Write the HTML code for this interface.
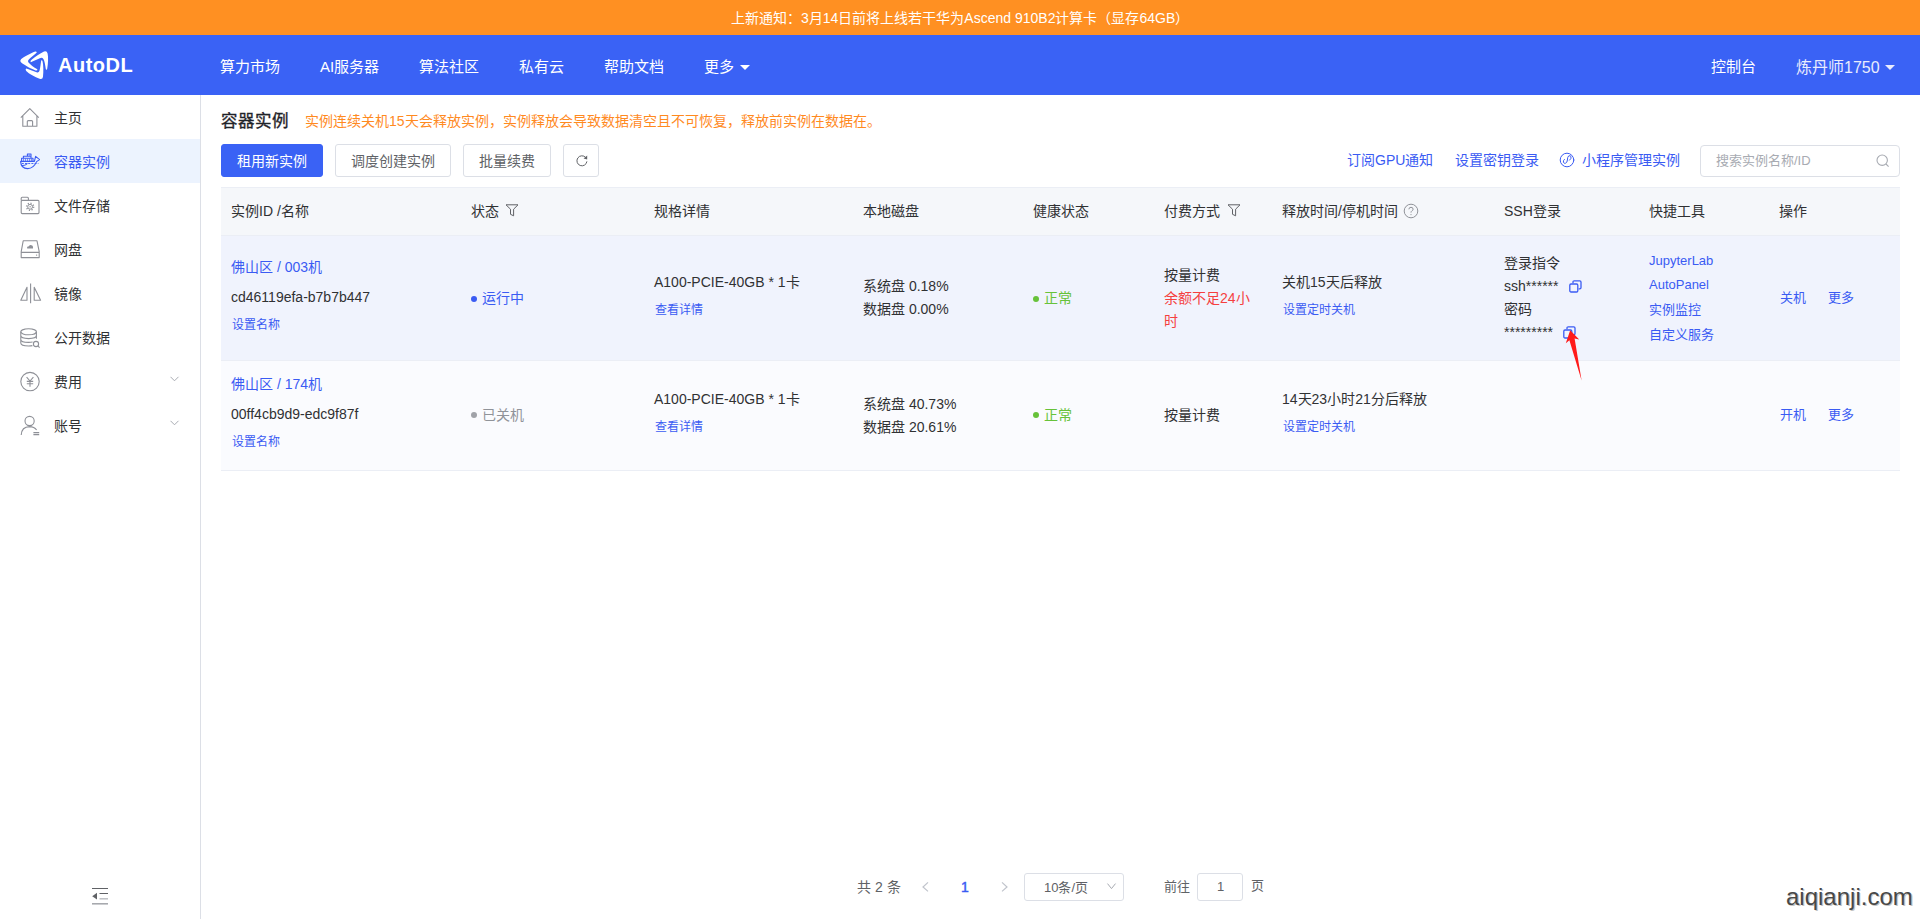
<!DOCTYPE html>
<html lang="zh-CN">
<head>
<meta charset="utf-8">
<title>容器实例 - AutoDL</title>
<style>
*{box-sizing:border-box;margin:0;padding:0}
html,body{width:1920px;height:919px;overflow:hidden;background:#fff}
body{position:relative;font-family:"Liberation Sans",sans-serif;font-size:14px;color:#303133}
.a{position:absolute;white-space:nowrap}
.notice{position:absolute;left:0;top:0;width:1920px;height:35px;background:#FF9022;color:#fff;font-size:14px;line-height:35px;padding-top:1px;padding-left:731px;white-space:nowrap}
.header{position:absolute;left:0;top:35px;width:1920px;height:60px;background:#3A62F5;color:#fff}
.nav{font-size:15px;line-height:20px;color:#fff}
.caret{position:absolute;width:0;height:0;border-left:5px solid transparent;border-right:5px solid transparent;border-top:5px solid #fff}
.sidebar{position:absolute;left:0;top:95px;width:201px;height:824px;border-right:1px solid #DCDFE6;background:#fff}
.mi{position:absolute;left:0;width:200px;height:44px}
.mi .t{position:absolute;left:54px;top:13px;font-size:14px;line-height:20px;color:#303133}
.mi.act{background:#ECF3FE}
.mi.act .t{color:#3A5BF3}
.mi svg{position:absolute;left:20px;top:12px}
.link{color:#3A5BF3}
.btn{position:absolute;top:144px;height:33px;border:1px solid #DCDFE6;border-radius:3px;background:#fff;font-size:14px;line-height:32px;text-align:center;color:#606266}
.btn.pri{background:#3A62F5;border-color:#3A62F5;color:#fff}
.table{position:absolute;left:221px;top:187px;width:1679px;height:284px}
.th{position:absolute;left:0;top:0;width:1679px;height:49px;background:#F5F7FA;border-top:1px solid #EBEEF5;border-bottom:1px solid #EBEEF5}
.r1{position:absolute;left:0;top:49px;width:1679px;height:125px;background:#F0F3FD;border-bottom:1px solid #EBEEF5}
.r2{position:absolute;left:0;top:174px;width:1679px;height:110px;background:#FAFBFE;border-bottom:1px solid #EBEEF5}
.t14{position:absolute;white-space:nowrap;font-size:14px;line-height:20px;color:#303133}
.t13{position:absolute;white-space:nowrap;font-size:13px;line-height:20px;color:#303133}
.t12{position:absolute;white-space:nowrap;font-size:12px;line-height:20px;color:#303133}
.lk{color:#3A5BF3}
.dot{position:absolute;width:6px;height:6px;border-radius:50%}
</style>
</head>
<body>
<div class="notice">上新通知：3月14日前将上线若干华为Ascend 910B2计算卡（显存64GB）</div>
<div class="header">
  <svg class="a" style="left:18px;top:13px" width="34" height="34" viewBox="0 0 34 34">
    <path fill="#fff" d="M18.8,4.6 Q18.6,3.2 16.5,3.8 C12,5.5 5,9.5 3,11.3 Q1.4,13 3.2,14.6 C7,17.5 14,21.5 17.6,22.4 Q19.8,22.8 19.3,21.3 C16,19.5 12,16.5 10.5,14.6 Q9.2,12.8 10.8,11.4 C13,9.5 16.5,7 18.8,4.6 Z"/>
    <path fill="#fff" d="M12.8,14.2 Q11.8,13.2 13.6,11.8 C17,9 22,5.5 26,3.6 Q28.8,2.4 29.6,5.4 C30.4,9 30.2,15 29.2,20.8 Q28.6,22.8 27.8,21 C27.2,17 26.6,13 25.4,11 Q24.2,9.2 21.8,10.2 C19,11.4 15.5,13 12.8,14.2 Z"/>
    <path fill="#fff" d="M8.2,20.6 Q7,21.4 8.2,23 C11,25.8 17,29 21.6,30.8 Q24.6,31.8 25,28.8 C25.6,23 25.4,17 24.6,13.4 Q24,11.4 23.2,12.6 C22.6,16 22.4,20 21.4,23 Q20.6,25 18.6,24.2 C15,23 11,21.6 8.2,20.6 Z"/>
  </svg>
  <div class="a" style="left:58px;top:18px;font-size:20px;line-height:24px;font-weight:bold;color:#fff;letter-spacing:0.5px">AutoDL</div>
  <div class="a nav" style="left:220px;top:22px">算力市场</div>
  <div class="a nav" style="left:320px;top:22px">AI服务器</div>
  <div class="a nav" style="left:419px;top:22px">算法社区</div>
  <div class="a nav" style="left:519px;top:22px">私有云</div>
  <div class="a nav" style="left:604px;top:22px">帮助文档</div>
  <div class="a nav" style="left:704px;top:22px">更多</div>
  <div class="caret" style="left:740px;top:30px"></div>
  <div class="a nav" style="left:1711px;top:22px">控制台</div>
  <div class="a nav" style="left:1796px;top:23px;font-size:16px;color:#E9ECFD">炼丹师1750</div>
  <div class="caret" style="left:1885px;top:30px;border-top-color:#E9ECFD"></div>
</div>
<div class="sidebar">
  <div class="mi" style="top:0">
    <svg width="20" height="20" viewBox="0 0 20 20" fill="none" stroke="#8E9097" stroke-width="1.1" stroke-linejoin="round"><path d="M0.8,10.6 L9.8,1.6 L18.8,10.6 M2.8,8.8 V19.3 H16.9 V8.8 M7.3,19.3 V14.6 Q7.3,13.6 8.3,13.6 H11.6 Q12.6,13.6 12.6,14.6 V19.3"/></svg>
    <div class="t">主页</div>
  </div>
  <div class="mi act" style="top:44px">
    <svg width="20" height="20" viewBox="0 0 20 20" fill="none" stroke="#3A5BF3" stroke-width="1.1" stroke-linejoin="round"><path d="M0.6,10.4 H14.4 L15.6,5.4 L19.6,8.6 L16.6,10.6 Q13.6,17.6 7.6,17.6 Q1,17.6 0.6,10.4 Z"/><path d="M1.6,10.4 V7.2 H13 V10.4 M3.4,7.2 V5.2 H11 V7.2 M7.4,5.2 V3 H11 V5.2"/><path d="M3.6,7.4 V10.2 M5.6,7.4 V10.2 M7.6,7.4 V10.2 M9.6,7.4 V10.2 M11.4,7.4 V10.2 M9.2,3.4 V5" stroke-width="0.9" stroke-opacity="0.8"/><path d="M1.8,12.5 H18.4" stroke-width="0.9" stroke-dasharray="2 1.2"/><path d="M1.8,14.6 Q5.2,14.8 7.6,12.6" stroke-width="1"/></svg>
    <div class="t">容器实例</div>
  </div>
  <div class="mi" style="top:88px">
    <svg width="20" height="20" viewBox="0 0 20 20" fill="none" stroke="#8E9097" stroke-width="1.1" stroke-linejoin="round"><path d="M1.2,5.4 V3.2 Q1.2,2.2 2.2,2.2 H7.4 Q8.4,2.2 8.4,3.2 V5.4"/><rect x="1.2" y="5.4" width="17.8" height="13.2" rx="1"/><circle cx="10.1" cy="11.8" r="3.5" stroke-width="1.5" stroke-dasharray="1.1 1.65"/><circle cx="10.1" cy="11.8" r="2.4" stroke-width="1"/><circle cx="10.1" cy="11.8" r="0.7" fill="#8E9097" stroke="none"/></svg>
    <div class="t">文件存储</div>
  </div>
  <div class="mi" style="top:132px">
    <svg width="20" height="20" viewBox="0 0 20 20" fill="none" stroke="#8E9097" stroke-width="1.1" stroke-linejoin="round"><path d="M3.2,1.8 H17 L19.2,12.6 V18.6 H1.2 V12.6 Z M1.2,13.4 H19.2"/><circle cx="16.6" cy="16.1" r="0.7" fill="#8E9097" stroke="none"/><path d="M7.2,9.6 Q6.6,7.2 9,7.2 Q9.6,5.4 11.4,6.2 Q13.4,6.6 13,9.6 Z" fill="#8E9097" stroke="none"/></svg>
    <div class="t">网盘</div>
  </div>
  <div class="mi" style="top:176px">
    <svg width="22" height="22" viewBox="0 0 22 22" fill="none" stroke="#8E9097" stroke-width="1.1" stroke-linejoin="round"><path d="M0.8,17.2 L7,4.2 V17.2 Z M14.2,4.2 L20.6,17.2 H14.2 Z M10.6,0.5 V20.2"/></svg>
    <div class="t">镜像</div>
  </div>
  <div class="mi" style="top:220px">
    <svg width="20" height="22" viewBox="0 0 20 22" fill="none" stroke="#8E9097" stroke-width="1.1" stroke-linejoin="round"><ellipse cx="8.6" cy="4.8" rx="7.8" ry="3"/><path d="M0.8,4.8 V16 Q0.8,19 8.6,19 Q11,19 12.4,18.6 M16.4,4.8 V11.8 M0.8,8.6 Q0.8,11.6 8.6,11.6 Q16.4,11.6 16.4,8.6 M0.8,12.4 Q0.8,15.4 8.6,15.4 Q10.8,15.4 12.6,15"/><circle cx="16" cy="17" r="2.6"/><path d="M17.8,18.8 L19.6,20.6"/></svg>
    <div class="t">公开数据</div>
  </div>
  <div class="mi" style="top:264px">
    <svg width="20" height="21" viewBox="0 0 20 21" fill="none" stroke="#8E9097" stroke-width="1.1" stroke-linejoin="round"><circle cx="10" cy="10.6" r="9.2"/><path d="M6.6,6.2 L10,10 L13.4,6.2 M6.8,10.4 H13.2 M6.8,12.8 H13.2 M10,10 V15.8"/></svg>
    <div class="t">费用</div>
    <svg style="left:170px;top:17px" width="10" height="7" viewBox="0 0 10 7" fill="none" stroke="#A8ABB2" stroke-width="1"><path d="M0.5,0.8 L4.5,4.8 L8.5,0.8"/></svg>
  </div>
  <div class="mi" style="top:308px">
    <svg width="20" height="21" viewBox="0 0 20 21" fill="none" stroke="#8E9097" stroke-width="1.1" stroke-linejoin="round"><circle cx="9.6" cy="6" r="4.6"/><path d="M1.2,20 Q1.6,11.8 9.6,11.6 Q14.2,11.6 16.6,15"/><path d="M13.4,17.6 H19.2 M13.4,19.6 H19.2"/></svg>
    <div class="t">账号</div>
    <svg style="left:170px;top:17px" width="10" height="7" viewBox="0 0 10 7" fill="none" stroke="#A8ABB2" stroke-width="1"><path d="M0.5,0.8 L4.5,4.8 L8.5,0.8"/></svg>
  </div>
  <svg style="position:absolute;left:92px;top:793px" width="17" height="18" viewBox="0 0 17 18" fill="none" stroke-width="1"><path d="M0,0.5 H16" stroke="#606266"/><path d="M7.5,5.5 H16" stroke="#606266"/><path d="M7.5,10.8 H16" stroke="#BDBFC4" stroke-width="1.5"/><path d="M0,15.8 H16" stroke="#A3A5AA" stroke-width="1.5"/><path d="M0.2,8.2 L5,4.8 V11.6 Z" fill="#606266" stroke="none"/></svg>
</div>
<div class="a" style="left:221px;top:109px;font-size:16.5px;line-height:24px;-webkit-text-stroke:0.35px #1F2329;color:#1F2329">容器实例</div>
<div class="a" style="left:305px;top:111px;font-size:14px;line-height:20px;color:#FF8A1F">实例连续关机15天会释放实例，实例释放会导致数据清空且不可恢复，释放前实例在数据在。</div>
<div class="btn pri" style="left:221px;width:102px">租用新实例</div>
<div class="btn" style="left:335px;width:116px">调度创建实例</div>
<div class="btn" style="left:463px;width:88px">批量续费</div>
<div class="btn" style="left:563px;width:36px">
  <svg style="position:absolute;left:11px;top:8px" width="14" height="14" viewBox="0 0 14 14" fill="none" stroke="#606266" stroke-width="1"><path d="M10.6,4.4 A5,5 0 1 0 11.9,8.4"/><path d="M12.2,2.6 L12.2,6.4 L8.6,5.6 Z" fill="#606266" stroke="none"/></svg>
</div>
<div class="a link" style="left:1347px;top:150px;font-size:14px;line-height:20px">订阅GPU通知</div>
<div class="a link" style="left:1455px;top:150px;font-size:14px;line-height:20px">设置密钥登录</div>
<svg class="a" style="left:1559px;top:152px" width="16" height="16" viewBox="0 0 16 16" fill="none" stroke="#3A5BF3" stroke-width="1" stroke-linecap="round"><circle cx="8" cy="8" r="6.8"/><path d="M5.4,7.4 Q4,8.6 4.4,10.2 Q5,11.8 6.6,11.2 Q8.2,10.6 8.4,8 Q8.4,5.2 9.6,4 Q11.2,3 12,4.6 Q12.6,6.6 10.6,8.2"/></svg>
<div class="a link" style="left:1582px;top:150px;font-size:14px;line-height:20px">小程序管理实例</div>
<div class="a" style="left:1700px;top:145px;width:200px;height:32px;border:1px solid #DCDFE6;border-radius:4px;background:#fff">
  <div class="a" style="left:15px;top:5px;font-size:13px;line-height:20px;color:#A8ABB2">搜索实例名称/ID</div>
  <svg class="a" style="left:175px;top:8px" width="14" height="14" viewBox="0 0 14 14" fill="none" stroke="#A8ABB2" stroke-width="1.1"><circle cx="6.2" cy="6.2" r="5.2"/><path d="M10,10 L12.6,12.6"/></svg>
</div>
<div class="table">
  <div class="th"></div>
  <div class="r1"></div>
  <div class="r2"></div>
</div>
<div class="t14" style="left:231px;top:201px">实例ID /名称</div>
<div class="t14" style="left:471px;top:201px">状态</div><svg class="a" style="left:505px;top:203px" width="14" height="15" viewBox="0 0 14 15" fill="none" stroke="#606266" stroke-width="1" stroke-linejoin="round"><path d="M1,1.8 H13 L8.6,6.2 V12.8 L5.5,11.3 V6.2 Z"/></svg>
<div class="t14" style="left:654px;top:201px">规格详情</div>
<div class="t14" style="left:863px;top:201px">本地磁盘</div>
<div class="t14" style="left:1033px;top:201px">健康状态</div>
<div class="t14" style="left:1164px;top:201px">付费方式</div><svg class="a" style="left:1227px;top:203px" width="14" height="15" viewBox="0 0 14 15" fill="none" stroke="#606266" stroke-width="1" stroke-linejoin="round"><path d="M1,1.8 H13 L8.6,6.2 V12.8 L5.5,11.3 V6.2 Z"/></svg>
<div class="t14" style="left:1282px;top:201px">释放时间/停机时间</div>
<svg class="a" style="left:1403px;top:203px" width="16" height="16" viewBox="0 0 16 16" fill="none" stroke="#909399" stroke-width="1"><circle cx="8" cy="8" r="6.8"/><path d="M5.9,6.3 Q5.9,4.3 8,4.3 Q10.1,4.3 10.1,6.2 Q10.1,7.3 8.9,7.9 Q8,8.4 8,9.6"/><circle cx="8" cy="11.6" r="0.6" fill="#909399" stroke="none"/></svg>
<div class="t14" style="left:1504px;top:201px">SSH登录</div>
<div class="t14" style="left:1649px;top:201px">快捷工具</div>
<div class="t14" style="left:1779px;top:201px">操作</div>

<div class="t14 lk" style="left:231px;top:257px">佛山区 / 003机</div>
<div class="t14" style="left:231px;top:287px">cd46119efa-b7b7b447</div>
<div class="t12 lk" style="left:232px;top:315px">设置名称</div>
<div class="dot" style="left:471px;top:296px;background:#3A5BF3"></div>
<div class="t14 lk" style="left:482px;top:288px">运行中</div>
<div class="t14" style="left:654px;top:272px">A100-PCIE-40GB * 1卡</div>
<div class="t12 lk" style="left:655px;top:300px">查看详情</div>
<div class="t14" style="left:863px;top:276px">系统盘 0.18%</div>
<div class="t14" style="left:863px;top:299px">数据盘 0.00%</div>
<div class="dot" style="left:1033px;top:296px;background:#67C23A"></div>
<div class="t14" style="left:1044px;top:288px;color:#67C23A">正常</div>
<div class="t14" style="left:1164px;top:265px">按量计费</div>
<div class="t14" style="left:1164px;top:288px;color:#F53F3F">余额不足24小</div>
<div class="t14" style="left:1164px;top:311px;color:#F53F3F">时</div>
<div class="t14" style="left:1282px;top:272px">关机15天后释放</div>
<div class="t12 lk" style="left:1283px;top:300px">设置定时关机</div>
<div class="t14" style="left:1504px;top:253px">登录指令</div>
<div class="t14" style="left:1504px;top:276px">ssh******</div><svg class="a" style="left:1569px;top:280px" width="13" height="13" viewBox="0 0 13 13" fill="none" stroke="#3A5BF3" stroke-width="1.3"><path d="M4,3.2 V2 Q4,0.8 5.2,0.8 H10.8 Q12,0.8 12,2 V7.6 Q12,8.8 10.8,8.8 H9.6"/><rect x="0.8" y="4" width="8" height="8" rx="1.2"/></svg>
<div class="t14" style="left:1504px;top:299px">密码</div>
<div class="t14" style="left:1504px;top:322px">*********</div><svg class="a" style="left:1563px;top:326px" width="13" height="13" viewBox="0 0 13 13" fill="none" stroke="#3A5BF3" stroke-width="1.3"><path d="M4,3.2 V2 Q4,0.8 5.2,0.8 H10.8 Q12,0.8 12,2 V7.6 Q12,8.8 10.8,8.8 H9.6"/><rect x="0.8" y="4" width="8" height="8" rx="1.2"/></svg>
<div class="t13 lk" style="left:1649px;top:251px">JupyterLab</div>
<div class="t13 lk" style="left:1649px;top:275px">AutoPanel</div>
<div class="t13 lk" style="left:1649px;top:300px">实例监控</div>
<div class="t13 lk" style="left:1649px;top:325px">自定义服务</div>
<div class="t13 lk" style="left:1780px;top:288px">关机</div>
<div class="t13 lk" style="left:1828px;top:288px">更多</div>

<div class="t14 lk" style="left:231px;top:374px">佛山区 / 174机</div>
<div class="t14" style="left:231px;top:404px">00ff4cb9d9-edc9f87f</div>
<div class="t12 lk" style="left:232px;top:432px">设置名称</div>
<div class="dot" style="left:471px;top:412px;background:#A0A2A8"></div>
<div class="t14" style="left:482px;top:405px;color:#909399">已关机</div>
<div class="t14" style="left:654px;top:389px">A100-PCIE-40GB * 1卡</div>
<div class="t12 lk" style="left:655px;top:417px">查看详情</div>
<div class="t14" style="left:863px;top:394px">系统盘 40.73%</div>
<div class="t14" style="left:863px;top:417px">数据盘 20.61%</div>
<div class="dot" style="left:1033px;top:412px;background:#67C23A"></div>
<div class="t14" style="left:1044px;top:405px;color:#67C23A">正常</div>
<div class="t14" style="left:1164px;top:405px">按量计费</div>
<div class="t14" style="left:1282px;top:389px">14天23小时21分后释放</div>
<div class="t12 lk" style="left:1283px;top:417px">设置定时关机</div>
<div class="t13 lk" style="left:1780px;top:405px">开机</div>
<div class="t13 lk" style="left:1828px;top:405px">更多</div>


<svg class="a" style="left:0;top:0;pointer-events:none" width="1920" height="919" viewBox="0 0 1920 919"><path fill="#FF1A1A" d="M1570.2,330.2 L1579.2,339.4 L1574.6,338.6 L1581.6,380.5 L1569.4,340.2 L1565.8,343.2 Z"/></svg>
<div class="t14" style="left:857px;top:877px;color:#606266">共 2 条</div>
<svg class="a" style="left:920px;top:880px" width="10" height="14" viewBox="0 0 10 14" fill="none" stroke="#C0C4CC" stroke-width="1.2"><path d="M8,2.4 L3,7 L8,11.4"/></svg>
<div class="t14" style="left:961px;top:877px;-webkit-text-stroke:0.45px #3A5BF3;color:#3A5BF3">1</div>
<svg class="a" style="left:1000px;top:880px" width="10" height="14" viewBox="0 0 10 14" fill="none" stroke="#C0C4CC" stroke-width="1.2"><path d="M2,2.4 L7,7 L2,11.4"/></svg>
<div class="a" style="left:1024px;top:873px;width:100px;height:28px;border:1px solid #DCDFE6;border-radius:3px"></div>
<div class="t13" style="left:1044px;top:878px;color:#606266">10条/页</div>
<svg class="a" style="left:1106px;top:882px" width="11" height="9" viewBox="0 0 11 9" fill="none" stroke="#A8ABB2" stroke-width="1"><path d="M1.5,1.6 L5.5,6.6 L9.5,1.6"/></svg>
<div class="t13" style="left:1164px;top:877px;color:#606266">前往</div>
<div class="a" style="left:1197px;top:873px;width:46px;height:28px;border:1px solid #DCDFE6;border-radius:3px"></div>
<div class="t13" style="left:1217px;top:877px;color:#606266">1</div>
<div class="t13" style="left:1251px;top:876px;color:#606266">页</div>
<div class="a" style="left:1786px;top:882px;font-size:24px;line-height:30px;color:#484848;text-shadow:1.2px 0.8px 0 #C4C4C4">aiqianji.com</div>
</body>
</html>
